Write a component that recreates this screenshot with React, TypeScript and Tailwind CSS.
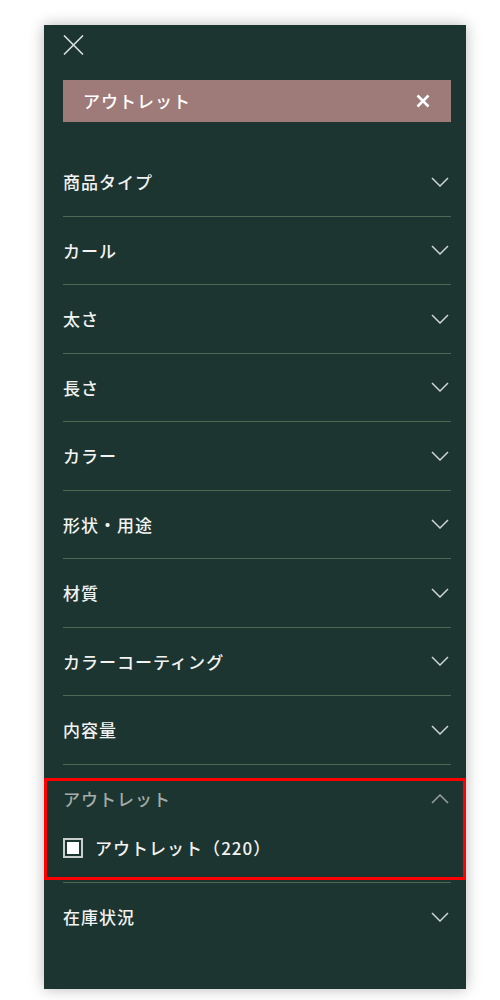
import React from "react";

const font = { fontFamily: '"Noto Sans CJK JP", "Noto Sans", sans-serif' };

function ChevronDown({ className = "" }: { className?: string }) {
  return (
    <svg width="18" height="10" viewBox="0 0 18 10" className={className} fill="none">
      <path d="M1 1 L9 9 L17 1" stroke="currentColor" strokeWidth="1.5" />
    </svg>
  );
}

function ChevronUp({ className = "" }: { className?: string }) {
  return (
    <svg width="18" height="10" viewBox="0 0 18 10" className={className} fill="none">
      <path d="M1 9 L9 1 L17 9" stroke="currentColor" strokeWidth="1.5" />
    </svg>
  );
}

const rows = [
  "商品タイプ",
  "カール",
  "太さ",
  "長さ",
  "カラー",
  "形状・用途",
  "材質",
  "カラーコーティング",
  "内容量",
];

function Row({ label, last = false }: { label: string; last?: boolean }) {
  return (
    <div
      className={
        last
          ? "flex h-[68.5px] items-center justify-between"
          : "flex h-[68.5px] items-center justify-between border-b border-[#4c6a53]"
      }
    >
      <span className="text-[17px] font-medium tracking-[0.06em] text-[#f2f2f2]">{label}</span>
      <ChevronDown className="mr-[2px] text-[#cdd5d2]" />
    </div>
  );
}

export default function App() {
  return (
    <div className="min-h-[1000px] w-[500px] bg-white pl-[44px] pt-[25px]" style={font}>
      <div className="h-[964px] w-[422px] bg-[#1c3530] pl-[19px] pr-[15px] shadow-[0_0_14px_rgba(0,0,0,0.28)]">
        <div className="pt-[10px]">
          <svg width="21" height="20" viewBox="0 0 21 20" fill="none">
            <path d="M1 0.5 L20 19.5 M20 0.5 L1 19.5" stroke="#d9dedc" strokeWidth="1.6" />
          </svg>
        </div>
        <div className="mt-[25px] flex h-[42px] items-center justify-between bg-[#9e7b79] pl-[20px] pr-[21px]">
          <span className="text-[17px] font-medium tracking-[0.06em] text-white">アウトレット</span>
          <svg width="14" height="14" viewBox="0 0 14 14" fill="none">
            <path d="M1.5 1.5 L12.5 12.5 M12.5 1.5 L1.5 12.5" stroke="white" strokeWidth="2.6" />
          </svg>
        </div>
        <div className="mt-[26px]">
          {rows.map((r) => (
            <Row key={r} label={r} />
          ))}
          <div className="relative border-b border-[#4c6a53] pb-[19px]">
            <div className="pointer-events-none absolute left-[-19px] right-[-15px] top-[13px] h-[102px] border-[3px] border-[#ff0000]" />
            <div className="flex h-[68px] items-center justify-between">
              <span className="text-[17px] font-medium tracking-[0.06em] text-[#a2aba7]">アウトレット</span>
              <ChevronUp className="mr-[2px] text-[#97a29e]" />
            </div>
            <div className="flex h-[30px] items-center gap-[12px]">
              <div className="flex h-[20px] w-[20px] items-center justify-center border-2 border-[#c9cfcc]">
                <div className="h-[12px] w-[12px] bg-white" />
              </div>
              <span className="text-[17px] font-medium tracking-[0.06em] text-[#f2f2f2]">アウトレット（220）</span>
            </div>
          </div>
          <Row label="在庫状況" last />
        </div>
      </div>
    </div>
  );
}
